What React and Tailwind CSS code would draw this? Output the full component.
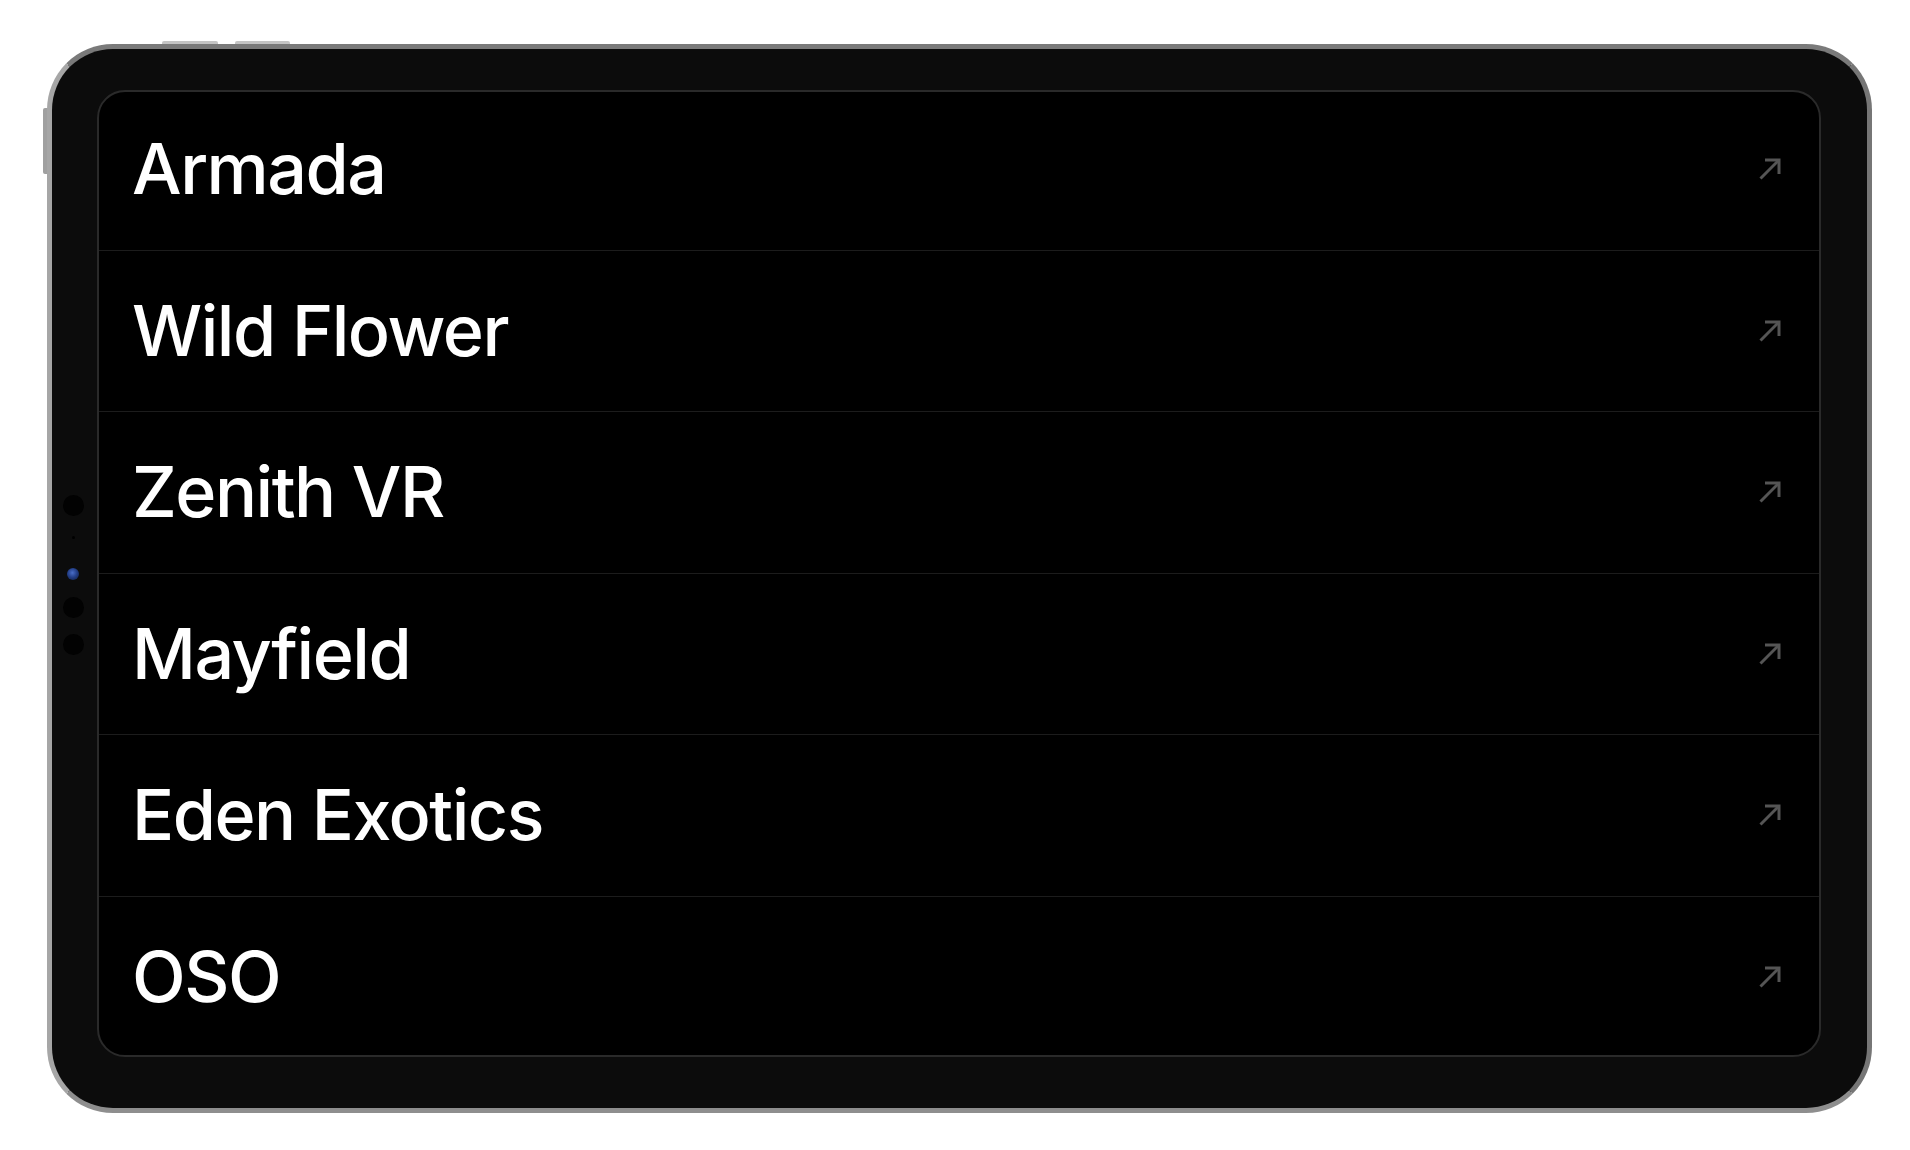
import React from "react";

const items = ["Armada", "Wild Flower", "Zenith VR", "Mayfield", "Eden Exotics", "OSO"];

function Arrow() {
  return (
    <svg width="22" height="22" viewBox="0 0 22 22" fill="none" className="shrink-0">
      <path d="M1.5 20.5 L20 2" stroke="#555555" strokeWidth="3" />
      <path d="M6 2 H20 V16" stroke="#555555" strokeWidth="3" strokeLinejoin="miter" />
    </svg>
  );
}

function CameraBar() {
  return (
    <div className="absolute left-[10px] top-[446px] w-[22px] flex flex-col items-center">
      <div className="w-[21px] h-[21px] rounded-full bg-[#020202]" />
      <div className="mt-[20px] w-[3px] h-[3px] rounded-full bg-black" />
      <div
        className="mt-[29px] w-[12px] h-[12px] rounded-full"
        style={{ background: "radial-gradient(circle at 45% 40%, #4a6ec8 0%, #24408a 45%, #0c1a3a 100%)" }}
      />
      <div className="mt-[17px] w-[21px] h-[21px] rounded-full bg-[#020202]" />
      <div className="mt-[16px] w-[21px] h-[21px] rounded-full bg-[#020202]" />
    </div>
  );
}

export default function App() {
  return (
    <div className="w-[1910px] h-[1150px] bg-white overflow-hidden" style={{ fontFamily: "Inter, 'Noto Sans', sans-serif" }}>
      <div className="pl-[47px] pt-[44px]">
        <div className="relative w-[1825px] h-[1069px]">
          {/* hardware buttons */}
          <div className="absolute left-[115px] top-[-3px] flex gap-[17px]">
            <div className="w-[56px] h-[4px] rounded-t-[2px] bg-[#c4c4c4]" />
            <div className="w-[55px] h-[4px] rounded-t-[2px] bg-[#c4c4c4]" />
          </div>
          <div className="absolute left-[-4px] top-[64px] w-[5px] h-[66px] rounded-l-[2px] bg-[#a0a0a0]" />

          <div className="relative w-full h-full rounded-[66px] border-[5px] border-t-[#7a7a7a] border-r-[#767676] border-b-[#8e8e8e] border-l-[#a6a6a6] bg-[#0c0c0c] pl-[45px] pt-[41px] pr-[46px] pb-[51px]">
            <CameraBar />

            <div className="w-full h-full rounded-[28px] border-2 border-[#2a2a2a] bg-black overflow-hidden flex flex-col justify-center">
              {items.map((name, i) => (
                <div
                  key={name}
                  className={`shrink-0 h-[161.5px] flex items-center justify-between pl-[33px] pr-[38px] ${i < items.length - 1 ? "border-b border-[#1c1c1c]" : ""}`}
                >
                  <span className="text-white text-[70px] font-medium leading-none tracking-[-1.5px]">{name}</span>
                  <Arrow />
                </div>
              ))}
            </div>
          </div>
        </div>
      </div>
    </div>
  );
}
